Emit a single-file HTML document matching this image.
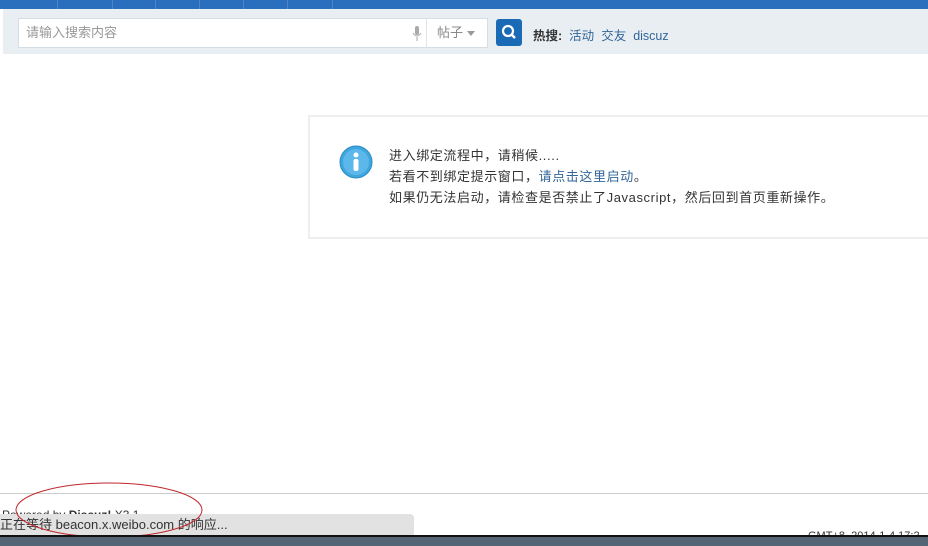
<!DOCTYPE html>
<html><head><meta charset="utf-8"><style>
body{margin:0;width:928px;height:546px;overflow:hidden;background:#fff;position:relative;font-family:"Liberation Sans","Noto Sans CJK SC",sans-serif;font-size:12px;color:#333}
.top{position:absolute;left:0;top:0;width:928px;height:9px;background:#2a6fbd}
.top i{position:absolute;top:0;width:1px;height:9px;background:#4d86c8}
.bar{position:absolute;left:3px;top:9px;width:925px;height:45px;background:#e9eef3}
.inp{position:absolute;left:18px;top:18px;width:408px;height:28px;background:#fff;border:1px solid #d5dde5;color:#999;font-size:13px;line-height:28px;text-indent:7px}
.sel{position:absolute;left:426px;top:18px;width:60px;height:28px;background:#fff;border:1px solid #d5dde5;border-left:1px solid #e3e3e3;color:#888;font-size:13px;line-height:28px;text-indent:10px}
.btn{position:absolute;left:496px;top:19px;width:26px;height:27px;background:#1b6ab6;border-radius:3px}
.hot{position:absolute;left:533px;top:25px;font-size:12.5px}
.hot b{color:#333}.hot a{color:#336699;margin-left:7px;text-decoration:none}
.box{position:absolute;left:308px;top:115px;width:630px;height:120px;border:2px solid #eee;background:#fff}
.msg{position:absolute;left:389px;top:145px;line-height:21px;font-size:13px;color:#333;letter-spacing:0.6px}
.msg a{color:#336699}
.hr{position:absolute;left:0;top:493px;width:928px;height:1px;background:#ccc}
.pw{position:absolute;left:2px;top:508px;font-size:12px;color:#333}
.st{position:absolute;left:0;top:514px;width:414px;height:22px;background:#e2e2e2;border-radius:0 4px 0 0;font-size:13px;line-height:22px;color:#333}
.tb{position:absolute;left:0;top:537px;width:928px;height:9px;background:#566575}
.gmt{position:absolute;left:808px;top:530px;font-size:11px;color:#333}
</style></head><body>
<div class="top"><i style="left:57px"></i><i style="left:112px"></i><i style="left:155px"></i><i style="left:199px"></i><i style="left:243px"></i><i style="left:287px"></i><i style="left:332px"></i></div>
<div class="bar"></div>
<div class="inp">请输入搜索内容</div>
<svg style="position:absolute;left:412px;top:26px" width="10" height="16"><rect x="3" y="0" width="4" height="9" rx="2" fill="#aaa"/><path d="M1 7q4 6 8 0M5 11v4" stroke="#aaa" fill="none"/></svg>
<div class="sel">帖子</div>
<svg style="position:absolute;left:467px;top:31px" width="8" height="5"><path d="M0 0h8L4 5z" fill="#999"/></svg>
<div class="btn"><svg width="26" height="27"><circle cx="12" cy="12" r="5" stroke="#fff" stroke-width="2.2" fill="none"/><path d="M15 15l4 4" stroke="#fff" stroke-width="2.5"/></svg></div>
<div class="hot"><b>热搜:</b><a>活动</a><a>交友</a><a>discuz</a></div>
<div class="box"></div>
<svg style="position:absolute;left:339px;top:145px" width="34" height="34"><circle cx="17" cy="17" r="16" fill="#3fa5dd" stroke="#2b8cc4"/><circle cx="17" cy="17" r="13" fill="#5cb8ea"/><circle cx="17" cy="10" r="2.5" fill="#fff"/><rect x="14.5" y="14" width="5" height="12" rx="2" fill="#fff"/></svg>
<div class="msg">进入绑定流程中，请稍候.....<br>若看不到绑定提示窗口，<a>请点击这里启动</a>。<br>如果仍无法启动，请检查是否禁止了Javascript，然后回到首页重新操作。</div>
<div class="hr"></div>
<div class="pw">Powered by <b>Discuz!</b> X3.1</div>
<div class="st">正在等待 beacon.x.weibo.com 的响应...</div>
<div class="gmt">GMT+8, 2014-1-4 17:2</div>
<svg style="position:absolute;left:14px;top:480px" width="192" height="60"><ellipse cx="95" cy="30" rx="93" ry="27" fill="none" stroke="#c0262b" stroke-width="1"/></svg>
<div class="tb"></div>
<div style="position:absolute;left:0;top:535px;width:928px;height:2px;background:#111"></div>
</body></html>
